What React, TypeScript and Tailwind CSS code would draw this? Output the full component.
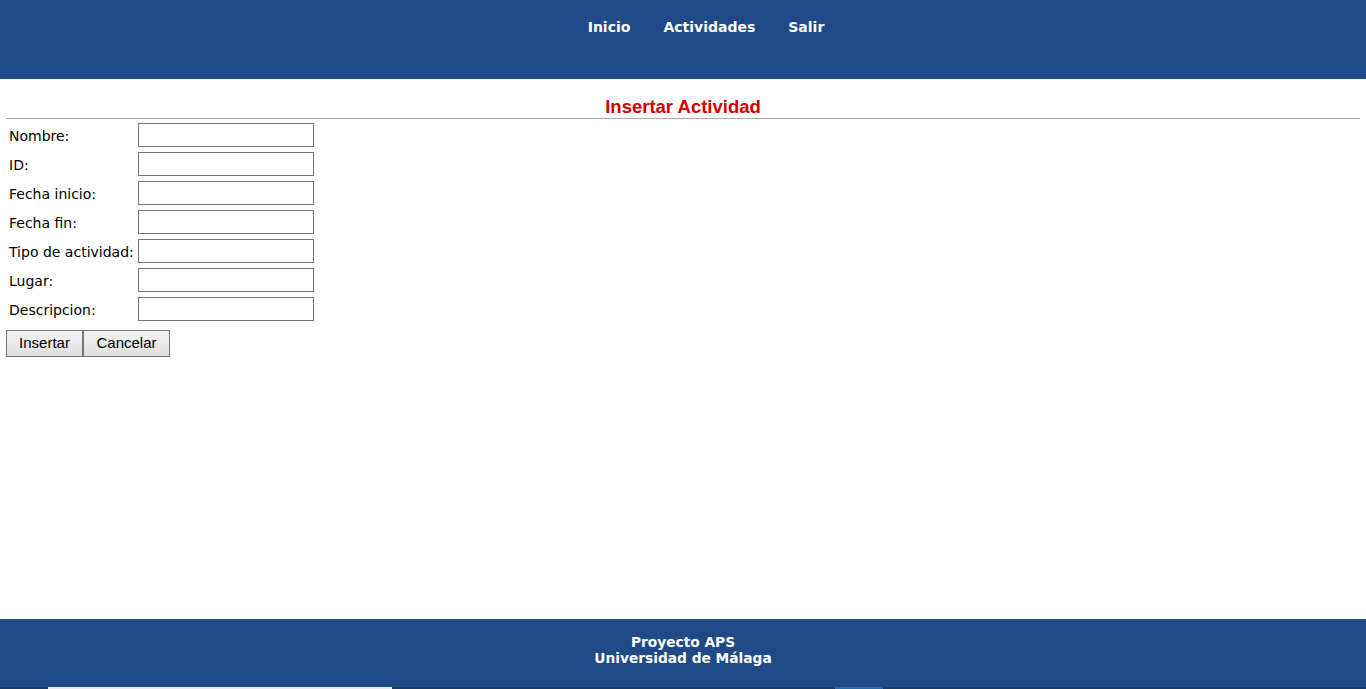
const campos = [
  'Nombre:',
  'ID:',
  'Fecha inicio:',
  'Fecha fin:',
  'Tipo de actividad:',
  'Lugar:',
  'Descripcion:',
];

export default function App() {
  return (
    <div className="flex h-[689px] flex-col bg-white">
      <header className="h-[79px] shrink-0 bg-[#204a87]">
        <nav className="flex justify-center gap-[33px] pt-[17px] pl-[46px] font-['DejaVu_Sans',sans-serif] text-[14px] font-bold text-white">
          <a href="#">Inicio</a>
          <a href="#">Actividades</a>
          <a href="#">Salir</a>
        </nav>
      </header>

      <main className="flex-1 px-[6px] pt-[15px]">
        <h2 className="pt-[1px] text-center font-['Liberation_Sans',sans-serif] text-[18.5px] leading-[23px] font-bold text-[#d40000]">
          Insertar Actividad
        </h2>
        <hr className="border-t border-[#aaaaaa]" />
        <table className="border-separate border-spacing-[2px] font-['DejaVu_Sans',sans-serif] text-[14px] text-black">
          <tbody>
            {campos.map((c) => (
              <tr key={c}>
                <td className="h-[27px] pt-[3px] pl-[1px] pr-[2px] whitespace-nowrap">{c}</td>
                <td>
                  <input className="block h-[24px] w-[176px] border border-[#767676] bg-white" />
                </td>
              </tr>
            ))}
          </tbody>
        </table>
        <div className="mt-[6px] flex font-['Liberation_Sans',sans-serif] text-[15px] text-black">
          <button className="h-[27px] w-[77px] border border-[#767676] bg-gradient-to-b from-[#f4f4f4] to-[#dedede]">
            Insertar
          </button>
          <button className="h-[27px] w-[87px] border border-[#767676] bg-gradient-to-b from-[#f4f4f4] to-[#dedede]">
            Cancelar
          </button>
        </div>
      </main>

      <footer className="h-[68px] shrink-0 bg-[#204a87] pt-[15px] text-center font-['DejaVu_Sans',sans-serif] text-[13.75px] leading-[16px] font-bold text-white">
        <p>Proyecto APS</p>
        <p>Universidad de Málaga</p>
      </footer>
      <div className="flex h-[2px] shrink-0 bg-[#1c3a5e]">
        <div className="ml-[48px] w-[344px] bg-[#e8e8e8]" />
        <div className="ml-[443px] w-[48px] bg-[#2a6aa8]" />
      </div>
    </div>
  );
}
